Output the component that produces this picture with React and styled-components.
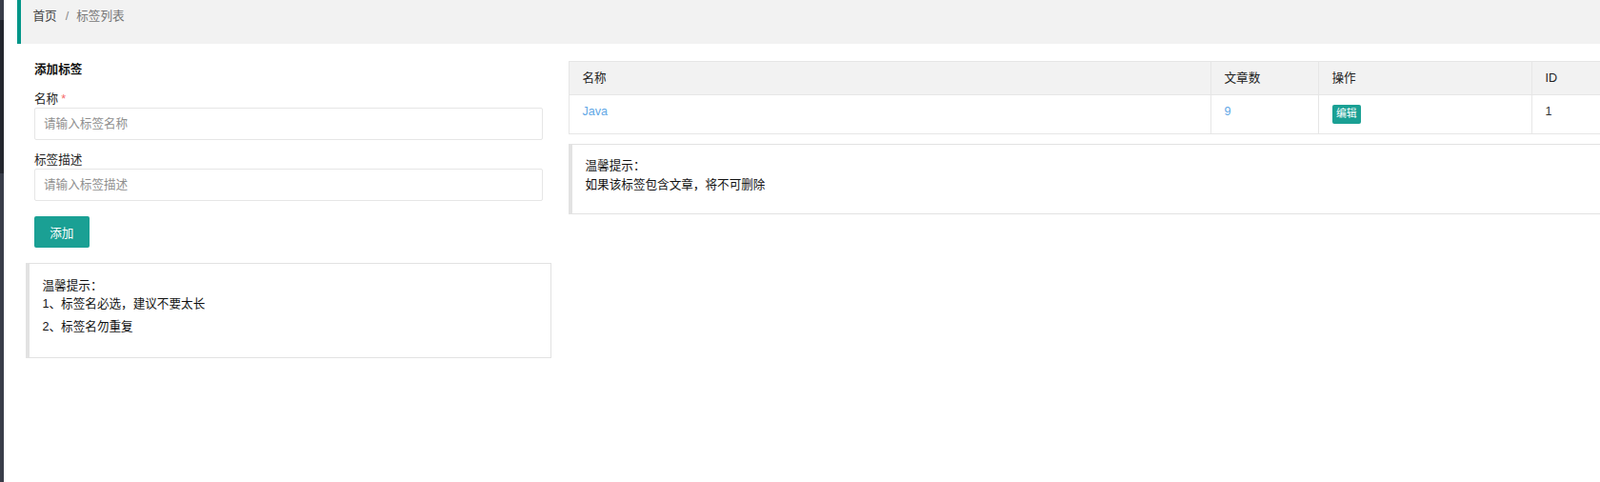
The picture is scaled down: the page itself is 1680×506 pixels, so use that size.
import React from 'react';
import styled, { createGlobalStyle } from 'styled-components';

const GlobalStyle = createGlobalStyle`
  html, body {
    margin: 0;
    padding: 0;
    background: #fff;
    overflow: hidden;
  }
  body {
    font-family: "Liberation Sans", "Noto Sans CJK SC", sans-serif;
    font-size: 12.6px;
    color: #333;
  }
  * {
    box-sizing: border-box;
  }
`;

const Page = styled.div`
  display: flex;
  height: 506px;
`;

// the left edge of the admin side menu, mostly scrolled away
const SideEdge = styled.div`
  flex: none;
  width: 4px;
  display: flex;
  flex-direction: column;
`;
const SideBlock = styled.div`
  flex: ${(p) => (p.$h ? 'none' : 1)};
  height: ${(p) => (p.$h ? `${p.$h}px` : 'auto')};
  background: ${(p) => (p.$dark ? '#23262e' : '#393d49')};
`;

const Main = styled.main`
  flex: none;
  width: 1724px;
  padding-left: 14px;
`;

const Crumbs = styled.div`
  height: 46px;
  padding: 8px 12.5px;
  margin-bottom: 9px;
  background: #f2f2f2;
  border-left: 4.5px solid #009688;
  line-height: 18px;
`;
const Crumb = styled.span`
  color: ${(p) => (p.$current ? '#777' : '#444')};
`;
const Sep = styled.span`
  margin: 0 8px 0 9px;
  color: #888;
`;

const Row = styled.div`
  display: grid;
  grid-template-columns: 570px 1140px;
`;
const Col = styled.div`
  padding: 9px;
`;

const Form = styled.form`
  padding: 0 9px;
  margin: 0 0 16px;
`;
const FormTitle = styled.div`
  font-weight: bold;
  line-height: 18px;
  margin-bottom: 13px;
  color: #111;
`;
const FormItem = styled.div`
  margin-bottom: 12px;
`;
const Label = styled.label`
  display: block;
  line-height: 18px;
  color: #222;
`;
const Star = styled.span`
  margin-left: 3px;
  color: #f56c6c;
`;
const Input = styled.input`
  display: block;
  width: 100%;
  height: 34px;
  padding: 0 9px;
  border: 1px solid #e6e6e6;
  border-radius: 2px;
  font: inherit;
  color: #333;
  outline: none;

  &::placeholder {
    color: #8f8f8f;
  }
`;
const ButtonRow = styled.div`
  padding-top: 4px;
`;
const Button = styled.button`
  height: 33px;
  padding: 0 16.2px;
  border: none;
  border-radius: 2px;
  background: #1aa094;
  color: #fff;
  font: inherit;
  cursor: pointer;
`;

const Quote = styled.div`
  padding: ${(p) => p.$pad || '13.5px'};
  margin-top: ${(p) => p.$mt || 0};
  border: 1px solid #e2e2e2;
  border-left-width: 4.5px;
  line-height: 19.8px;
  color: #111;
`;
const QuoteLine = styled.p`
  margin: 0 0 4px;
`;

const Table = styled.table`
  width: 100%;
  table-layout: fixed;
  border-collapse: collapse;
  border: 1px solid #e6e6e6;
`;
const Th = styled.th`
  padding: 8px 13.5px;
  line-height: 18px;
  text-align: left;
  font-weight: normal;
  color: #222;
  background: #f2f2f2;
  border: 1px solid #e6e6e6;
`;
const Td = styled.td`
  height: 41px;
  padding: 8px 13.5px;
  line-height: 18px;
  vertical-align: top;
  border: 1px solid #e6e6e6;
  color: ${(p) => (p.$link ? '#62a8e6' : '#333')};
`;
const EditButton = styled.span`
  display: inline-block;
  height: 19.8px;
  margin-top: 2px;
  padding: 0 4.5px;
  line-height: 19.8px;
  font-size: 10.8px;
  color: #fff;
  background: #1aa094;
  border-radius: 2px;
`;

const columns = [
  { title: '名称', width: 674 },
  { title: '文章数', width: 113 },
  { title: '操作', width: 224 },
  { title: 'ID', width: 111 },
];

const tags = [{ id: 1, name: 'Java', count: 9 }];

export default function App() {
  return (
    <>
      <GlobalStyle />
      <Page>
        <SideEdge>
          <SideBlock $h={21} />
          <SideBlock $h={161} $dark />
          <SideBlock />
        </SideEdge>
        <Main>
          <Crumbs>
            <Crumb>首页</Crumb>
            <Sep>/</Sep>
            <Crumb $current>标签列表</Crumb>
          </Crumbs>
          <Row>
            <Col>
              <Form onSubmit={(e) => e.preventDefault()}>
                <FormTitle>添加标签</FormTitle>
                <FormItem>
                  <Label htmlFor="tag_name">
                    名称<Star>*</Star>
                  </Label>
                  <Input id="tag_name" placeholder="请输入标签名称" />
                </FormItem>
                <FormItem>
                  <Label htmlFor="tag_desc">标签描述</Label>
                  <Input id="tag_desc" placeholder="请输入标签描述" />
                </FormItem>
                <ButtonRow>
                  <Button type="submit">添加</Button>
                </ButtonRow>
              </Form>
              <Quote $pad="13.5px 13.5px 17px">
                温馨提示：
                <QuoteLine>1、标签名必选，建议不要太长</QuoteLine>
                <QuoteLine>2、标签名勿重复</QuoteLine>
              </Quote>
            </Col>
            <Col>
              <Table>
                <colgroup>
                  {columns.map((c) => (
                    <col key={c.title} style={{ width: c.width }} />
                  ))}
                </colgroup>
                <thead>
                  <tr>
                    {columns.map((c) => (
                      <Th key={c.title}>{c.title}</Th>
                    ))}
                  </tr>
                </thead>
                <tbody>
                  {tags.map((t) => (
                    <tr key={t.id}>
                      <Td $link>{t.name}</Td>
                      <Td $link>{t.count}</Td>
                      <Td>
                        <EditButton>编辑</EditButton>
                      </Td>
                      <Td>{t.id}</Td>
                    </tr>
                  ))}
                </tbody>
              </Table>
              <Quote $mt="10px" $pad="13px 13.5px 19px">
                温馨提示：
                <br />
                如果该标签包含文章，将不可删除
              </Quote>
            </Col>
          </Row>
        </Main>
      </Page>
    </>
  );
}
